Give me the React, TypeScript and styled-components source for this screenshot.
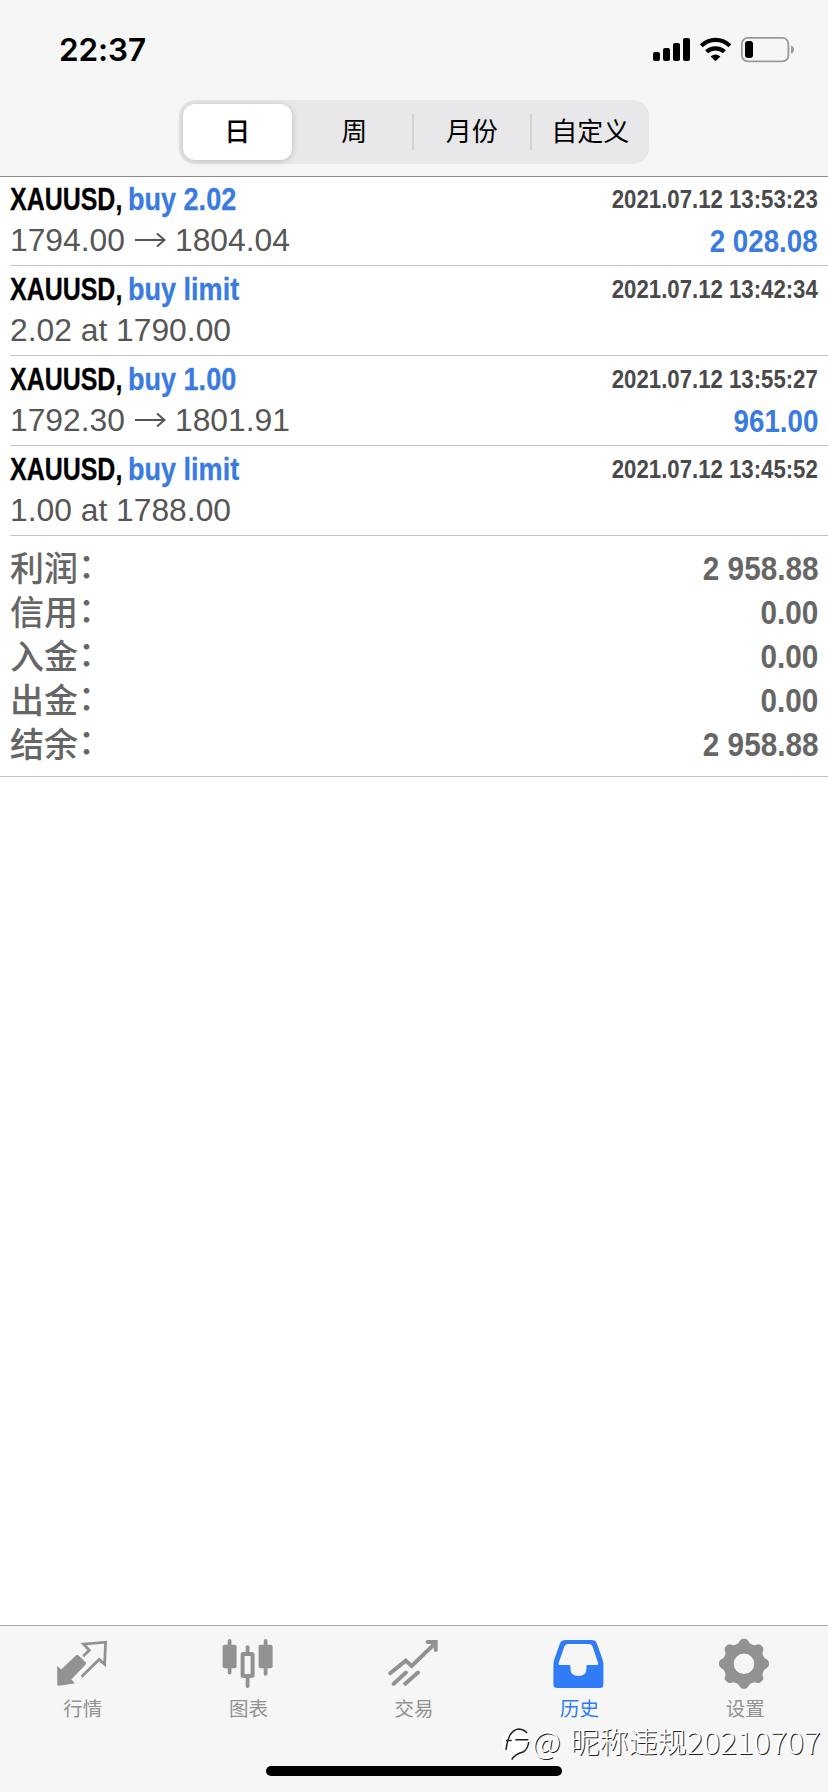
import React from 'react';
import styled, { createGlobalStyle } from 'styled-components';

const GlobalStyle = createGlobalStyle`
  * { box-sizing: border-box; }
  body {
    margin: 0;
    background: #fff;
    font-family: "Liberation Sans", "Noto Sans CJK SC", sans-serif;
  }
`;

const latin = '"Liberation Sans", sans-serif';
const cjk = '"Noto Sans CJK SC", sans-serif';
const blue = '#3a7be0';

const Screen = styled.div`
  position: relative;
  display: flex;
  flex-direction: column;
  width: 828px;
  height: 1792px;
  background: #fff;
  overflow: hidden;
`;

const Header = styled.header`
  display: flex;
  flex-direction: column;
  align-items: center;
  height: 177px;
  background: #f6f6f6;
  border-bottom: 1px solid #8b8b8d;
`;

const StatusBar = styled.div`
  display: flex;
  justify-content: space-between;
  align-items: center;
  width: 100%;
  height: 100px;
  padding: 0 34px 0 59px;
`;

const Clock = styled.div`
  font: 600 31.5px/40px Inter, sans-serif;
  letter-spacing: -0.1px;
  color: #000;
`;

const Segments = styled.div`
  display: grid;
  grid-template-columns: repeat(4, 1fr);
  width: 470px;
  height: 64px;
  border-radius: 16px;
  background: #e8e8ea;
`;

const Segment = styled.button<{ $active?: boolean; $divider?: boolean }>`
  display: flex;
  align-items: center;
  justify-content: center;
  margin: ${p => (p.$active ? '4px 5px 4px 4px' : '14px 0')};
  padding: 0 0 4px;
  border: 0;
  border-right: ${p => (p.$divider ? '2px solid #d2d2d5' : '0')};
  border-radius: ${p => (p.$active ? '12px' : '0')};
  background: ${p => (p.$active ? '#fff' : 'transparent')};
  box-shadow: ${p => (p.$active ? '0 1px 6px rgba(0, 0, 0, 0.2)' : 'none')};
  font: ${p => (p.$active ? 500 : 400)} 26px/32px ${cjk};
  white-space: nowrap;
  color: #000;
`;

const Deal = styled.article`
  height: 90px;
  margin-left: 10px;
  padding: 3px 10px 0 0;
  border-bottom: 1px solid #c2c3c5;
  &:first-child { height: 89px; padding-top: 2px; }
`;

const Line = styled.div`
  display: flex;
  justify-content: space-between;
  align-items: flex-start;
  height: 40px;
`;

const Title = styled.div`
  display: flex;
  font: bold 32px/40px ${latin};
  color: #000;
  white-space: nowrap;
  -webkit-text-stroke: 0.3px currentColor;
`;

const Symbol = styled.span`
  width: 118px;
  transform: scaleX(0.78);
  transform-origin: left;
`;

const Action = styled.span`
  color: ${blue};
  transform: scaleX(0.845);
  transform-origin: left;
`;

const Stamp = styled.time`
  font: bold 25.5px/40px ${latin};
  color: #4a4a4c;
  transform: scaleX(0.87);
  transform-origin: right;
`;

const Price = styled.div`
  display: flex;
  align-items: center;
  font: 31.8px/42px ${latin};
  color: #565656;
`;

const Arrow = styled.svg`
  width: 32px;
  height: 16px;
  margin: 0 9px;
`;

const Profit = styled.div`
  font: bold 31.5px/44px ${latin};
  color: ${blue};
  transform: scaleX(0.88);
  transform-origin: right;
`;

const Summary = styled.section`
  height: 241px;
  padding: 11px 10px 0;
  border-bottom: 1px solid #c2c3c5;
`;

const Total = styled.div`
  display: flex;
  justify-content: space-between;
  height: 44px;
  color: #666;
`;

const TotalLabel = styled.span`
  font: 500 34px/40px ${cjk};
`;

const Colon = styled.span`
  position: relative;
  top: -3px;
`;

const TotalValue = styled.span`
  font: bold 33px/44px ${latin};
  transform: scaleX(0.9);
  transform-origin: right;
`;

const TabBar = styled.nav`
  display: grid;
  grid-template-columns: repeat(5, 1fr);
  height: 167px;
  margin-top: auto;
  padding-top: 13px;
  border-top: 1px solid #a6a8a8;
  background: #f6f6f6;
`;

const Tab = styled.a<{ $active?: boolean }>`
  display: flex;
  flex-direction: column;
  align-items: center;
  color: ${p => (p.$active ? '#2f7cf6' : '#929292')};
`;

const TabIcon = styled.svg`
  width: 50px;
  height: 50px;
  overflow: visible;
`;

const TabLabel = styled.span`
  margin-top: 4px;
  font: 400 19.5px/30px ${cjk};
`;

const HomeIndicator = styled.div`
  position: absolute;
  left: 266px;
  bottom: 16px;
  width: 296px;
  height: 10px;
  border-radius: 5px;
  background: #000;
`;

const Watermark = styled.div`
  position: absolute;
  left: 502px;
  bottom: 32px;
  display: flex;
  align-items: center;
  color: #fff;
  white-space: pre;
  text-shadow: 1px 1px 0.5px #222, 0 0 2px #fff;
`;

const WatermarkLatin = styled.span`
  font: 300 31.5px/40px ${cjk};
  letter-spacing: -0.1px;
`;

const WatermarkName = styled.span`
  margin-left: 10px;
  font: 300 29px/40px ${cjk};
`;

const WatermarkLogo = styled.svg`
  width: 30px;
  height: 34px;
  overflow: visible;
`;

const gearPath = (() => {
  const point = (deg: number, r: number) => {
    const a = (deg * Math.PI) / 180;
    return `${(24 + r * Math.cos(a)).toFixed(2)} ${(24.7 + r * Math.sin(a)).toFixed(2)}`;
  };
  let d = '';
  for (let i = 0; i < 8; i += 1) {
    const a = i * 45;
    d += `${i ? 'L' : 'M'}${point(a - 12, 22.6)}`;
    d += `Q${point(a - 8, 24.8)} ${point(a - 4, 25)}L${point(a + 4, 25)}`;
    d += `Q${point(a + 8, 24.8)} ${point(a + 12, 22.6)}`;
    d += `Q${point(a + 14, 20.8)} ${point(a + 22.5, 20.8)}Q${point(a + 31, 20.8)} ${point(a + 33, 22.6)}`;
  }
  return `${d}ZM34.3 24.7A10.3 10.3 0 1 0 13.7 24.7A10.3 10.3 0 1 0 34.3 24.7Z`;
})();

const tabs = [
  {
    label: '行情',
    icon: (
      <>
        <path fill="currentColor" d="M-.8 27L3.2 30.4L17.8 16.4Q19.2 15.2 20.6 16.5L27.6 23.3Q28.6 24.4 27.6 25.4L13.4 40.4L17 44.2L1.2 46.8Q-.8 47-.8 45Z" />
        <path fill="none" stroke="currentColor" strokeWidth="2.8" d="M25.2 17.2L31.3 11.2L25.6 5.2L47.6 3.2L46.6 25.2L41.2 20.4L23.6 37.8" />
      </>
    ),
  },
  {
    label: '图表',
    icon: (
      <g fill="currentColor">
        <rect x="-.4" y="5.7" width="14" height="23.6" rx="2" />
        <rect x="4.7" y="0" width="3.8" height="35.5" rx="1.9" />
        <rect x="35.6" y="5.7" width="14" height="23.6" rx="2" />
        <rect x="40.7" y="0" width="3.8" height="36.7" rx="1.9" />
        <rect x="19.6" y="15" width="10" height="22" rx="1" fill="none" stroke="currentColor" strokeWidth="4" />
        <rect x="22.7" y="6.3" width="3.8" height="9" rx="1.9" />
        <rect x="22.7" y="37" width="3.8" height="12" rx="1.9" />
      </g>
    ),
  },
  {
    label: '交易',
    icon: (
      <g fill="none" stroke="currentColor" strokeWidth="4" strokeLinecap="round">
        <path d="M1.2 34.2L16.7 21.6L22.7 27L46 4.4" />
        <path d="M4.7 44.8L17 33.6M16.2 44.8L29 33.6" />
        <path d="M38.5 3H46.7V11" />
        <path fill="currentColor" stroke="none" d="M40 3H47V11Z" />
      </g>
    ),
  },
  {
    label: '历史',
    active: true,
    icon: (
      <path fill="currentColor" fillRule="evenodd" d="M11 1H36.6Q40.6 1 41.8 4.2L47.4 20Q48.4 23 48.4 26V45.5Q48.4 49 45 49H2Q-1.6 49-1.6 45.5V26Q-1.6 23-.6 20L5 4.2Q6.4 1 11 1ZM13 5Q10.2 5 9.4 7.5L3.6 24.2Q3 26 5 26H14Q15.4 26 15.4 27.4V29.5Q15.4 37 23.4 37Q31.4 37 31.4 29.5V27.4Q31.4 26 32.8 26H41.6Q43.8 26 43.2 24.2L37.6 7.5Q36.8 5 34.2 5Z" />
    ),
  },
  { label: '设置', icon: <path fill="currentColor" fillRule="evenodd" d={gearPath} /> },
];

const deals = [
  { action: 'buy 2.02', time: '2021.07.12 13:53:23', from: '1794.00', to: '1804.04', profit: '2 028.08' },
  { action: 'buy limit', time: '2021.07.12 13:42:34', from: '2.02 at 1790.00' },
  { action: 'buy 1.00', time: '2021.07.12 13:55:27', from: '1792.30', to: '1801.91', profit: '961.00' },
  { action: 'buy limit', time: '2021.07.12 13:45:52', from: '1.00 at 1788.00' },
];

const totals = [
  ['利润', '2 958.88'],
  ['信用', '0.00'],
  ['入金', '0.00'],
  ['出金', '0.00'],
  ['结余', '2 958.88'],
];

const StatusIcons = () => (
  <svg width="142" height="26" viewBox="652 37 142 26">
    <rect x="653" y="52" width="7" height="9" rx="2" />
    <rect x="663" y="48" width="7" height="13" rx="2" />
    <rect x="673" y="43" width="7" height="18" rx="2" />
    <rect x="683" y="38" width="7" height="23" rx="2" />
    <g fill="none" stroke="#000" strokeWidth="4.2">
      <path d="M701.3 45.8A20 20 0 0 1 729.9 45.8" />
      <path d="M706.6 51.8A13 13 0 0 1 724.4 51.8" />
    </g>
    <path d="M710.6 56.4Q715.5 52.8 720.4 56.4L716.6 60.3Q715.5 61.3 714.4 60.3Z" />
    <rect x="741.8" y="37.9" width="46.6" height="23.4" rx="6" fill="none" stroke="#999" strokeWidth="1.8" />
    <rect x="745" y="41" width="8" height="17" rx="3" />
    <path fill="#999" d="M791 45.6Q794 46.6 794 49.6T791 53.6Z" />
  </svg>
);

export default function App() {
  return (
    <Screen>
      <GlobalStyle />
      <Header>
        <StatusBar>
          <Clock>22:37</Clock>
          <StatusIcons />
        </StatusBar>
        <Segments>
          <Segment $active>日</Segment>
          <Segment $divider>周</Segment>
          <Segment $divider>月份</Segment>
          <Segment>自定义</Segment>
        </Segments>
      </Header>
      <main>
        <div>
          {deals.map(d => (
            <Deal key={d.time}>
              <Line>
                <Title>
                  <Symbol>XAUUSD,</Symbol>
                  <Action>{d.action}</Action>
                </Title>
                <Stamp>{d.time}</Stamp>
              </Line>
              <Line>
                <Price>
                  {d.from}
                  {d.to && (
                    <>
                      <Arrow viewBox="0 0 32 16" fill="none" stroke="currentColor" strokeWidth="2">
                        <path d="M1 8H30M23 1.5L30.5 8L23 14.5" />
                      </Arrow>
                      {d.to}
                    </>
                  )}
                </Price>
                {d.profit && <Profit>{d.profit}</Profit>}
              </Line>
            </Deal>
          ))}
        </div>
        <Summary>
          {totals.map(([label, value]) => (
            <Total key={label}>
              <TotalLabel>{label}<Colon>：</Colon></TotalLabel>
              <TotalValue>{value}</TotalValue>
            </Total>
          ))}
        </Summary>
      </main>
      <TabBar>
        {tabs.map(t => (
          <Tab key={t.label} $active={t.active}>
            <TabIcon viewBox="0 0 50 50">{t.icon}</TabIcon>
            <TabLabel>{t.label}</TabLabel>
          </Tab>
        ))}
      </TabBar>
      <HomeIndicator />
      <Watermark>
        <WatermarkLogo viewBox="0 0 30 34">
          <path fill="#fff" d="M0 18Q1 6 14 5Q27 6 27.5 18Q27 29 15 33L9.5 37.5L9 31Q0 28 0 18Z" />
          <path fill="none" stroke="#222" strokeWidth="1.5" d="M4 27Q5 18 8 12Q12 6 17 6Q22 6.5 25 10M4 17.5H9.7M13.3 16.7H26.3M26.7 19Q26 26 21 29Q13 31 9.7 36.7" />
        </WatermarkLogo>
        <WatermarkLatin>@</WatermarkLatin>
        <WatermarkName>昵称违规</WatermarkName>
        <WatermarkLatin>20210707</WatermarkLatin>
      </Watermark>
    </Screen>
  );
}
